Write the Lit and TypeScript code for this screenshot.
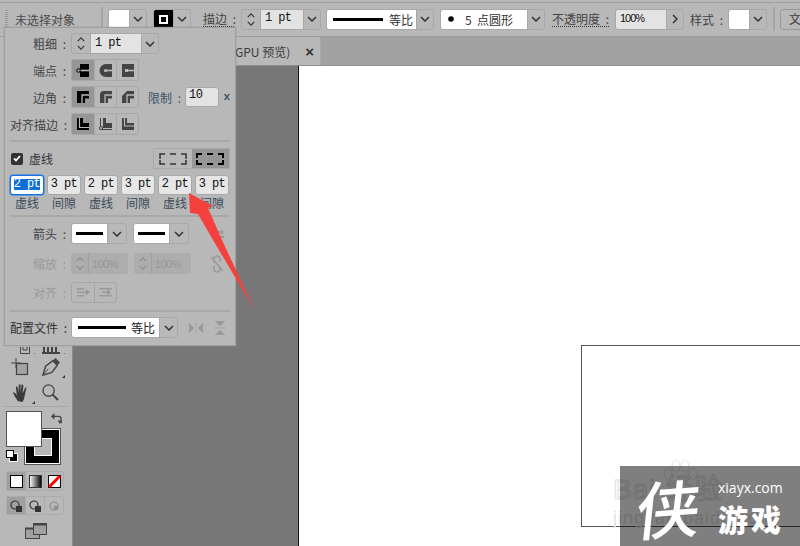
import { LitElement, html, css, svg } from "lit";
import { customElement } from "lit/decorators.js";

const chev = (dir: string = "down") => html`<svg class="chev" viewBox="0 0 10 6" width="10" height="6">
  <path d=${dir === "down" ? "M1 1l4 4 4-4" : "M1 5l4-4 4 4"} fill="none" stroke="currentColor" stroke-width="1.5"/></svg>`;

const spin = () => html`<span class="spin">${chev("up")}${chev("down")}</span>`;

const capIcon = (k: number, c: string) => html`<svg viewBox="0 0 14 14" width="14" height="14">
  ${k === 0 ? svg`<rect x="4" y="1" width="9" height="13" fill="${c}"/>` : k === 1 ? svg`<path d="M13 1H7a6.500 6.500 0 0 0 0 13h6z" fill="${c}"/>` : svg`<rect x="1" y="1" width="12" height="13" fill="${c}"/>`}
  <path d="M${k === 0 ? 2 : 6} 7.500H13" stroke="#b8b8b8" stroke-width="1.6"/>
  ${k === 0 ? svg`<circle cx="2.500" cy="7.500" r="1.800" fill="#969696" stroke="${c}"/>` : k === 1 ? svg`<circle cx="6.500" cy="7.500" r="1.600" fill="#b8b8b8"/>` : svg`<rect x="4" y="6" width="3" height="3" fill="#b8b8b8"/>`}
</svg>`;

const cornerIcon = (k: number, c: string) => html`<svg viewBox="0 0 14 14" width="14" height="14">
  <path d=${k === 0 ? "M1 1H13V8.500H9V13H1z" : k === 1 ? "M5 1H13V8.500H9V13H1V5Q1 1 5 1z" : "M6 1H13V8.500H9V13H1V6z"} fill="${c}"/>
  <path d="M13 5H6V13" fill="none" stroke="#b8b8b8" stroke-width="1.300"/>
</svg>`;

const alignIcon = (k: number, c: string) => html`<svg viewBox="0 0 14 14" width="14" height="14">
  <path d=${k === 0 ? "M1 1H7V6H13V13H1z" : k === 1 ? "M4 1H7V6H13V11H4z" : "M1 1H6V6H13V13H1z"} fill="${c}"/>
  ${k === 0 ? svg`<path d="M3.500 1V10.500H13" fill="none" stroke="#b8b8b8" stroke-width="1.200"/>` : k === 1 ? svg`<path d="M1.500 1V12.500H13" fill="none" stroke="${c}" stroke-width="1"/><circle cx="2" cy="11" r="1.600" fill="#b8b8b8" stroke="${c}"/>` : svg`<path d="M3.500 1V9H13" fill="none" stroke="#b8b8b8" stroke-width="1.200"/>`}
</svg>`;

const lineSvg = (w: number, h = 3) => html`<svg width=${w} height=${h} class="ln"><rect width=${w} height=${h} fill="#000"/></svg>`;

@customElement("app-root")
export class AppRoot extends LitElement {
  static styles = css`
    :host { display: block; width: 800px; height: 546px; position: relative; overflow: hidden;
      font-family: "Noto Sans CJK SC", "Liberation Sans", sans-serif; font-size: 12px; color: #3c3c3c; background: #b8b8b8; }
    * { box-sizing: border-box; }
    .app { width: 800px; height: 546px; display: flex; flex-direction: column; }
    svg { display: block; flex: none; }

    .top { height: 37px; flex: none; display: flex; align-items: center; padding-top: 2px;
      background: linear-gradient(#b8b8b8 0 2px, #a0a0a0 2px 3px, #b8b8b8 3px);
      border-bottom: 1px solid #9c9c9c; position: relative; }
    .top > * { flex: none; }
    .grip { width: 3px; height: 18px; margin-left: 5px; background: repeating-linear-gradient(#9a9a9a 0 1px, transparent 1px 2px); }
    .none { width: 93px; padding-left: 7px; color: #4a4a4a; white-space: nowrap; }
    .vsep { width: 2px; height: 24px; background: #a6a6a6; }
    .ctl { display: flex; height: 21px; border: 1px solid #a8a8a8; border-radius: 3px; align-items: stretch; flex: none; overflow: hidden; color: #222; }
    .chevbox { width: 17px; display: flex; align-items: center; justify-content: center; border-left: 1px solid #a8a8a8; color: #333; flex: none; }
    .swatch { width: 20px; background: #fff; }
    .swatch.stroke { width: 19px; background: #000; display: flex; align-items: center; justify-content: center; }
    .swatch.stroke i { display: block; width: 9px; height: 9px; border: 2px solid #fff; background: #000; }
    .lbl { white-space: nowrap; color: #444; word-spacing: 3px; }
    .dot { border-bottom: 1px dotted #333; line-height: 15px; }
    .spin { width: 18px; display: flex; flex-direction: column; align-items: center; justify-content: center; gap: 3px; color: #333; flex: none; }
    .spin .chev { width: 8px; height: 5px; }
    .num { font-family: "Liberation Mono", monospace; font-size: 12px; letter-spacing: -0.6px; background: #e3e3e3; padding: 0 0 2px 4px; color: #111; display: flex; align-items: center; white-space: nowrap; border-left: 1px solid #a8a8a8; }
    .white { background: #fff; display: flex; align-items: center; color: #333; white-space: nowrap; }
    .btn-w { height: 21px; width: 30px; border: 1px solid #999; border-radius: 3px; padding-left: 8px; margin-left: 5px; line-height: 18px; }

    .m-fill { margin-left: 5px; }
    .m-stroke { margin-left: 6px; }
    .l-stroke { margin-left: 12px; width: 31px; }
    .m-7 { margin-left: 7px; }
    .m-5 { margin-left: 5px; }
    .m-6 { margin-left: 6px; }
    .n43 { width: 43px; }
    .n51 { width: 51px; }
    .w-line { width: 89px; padding-left: 6px; gap: 6px; }
    .w-brush { width: 86px; padding-left: 7px; }
    .b5 { margin-left: 11px; }
    .l-op { margin-left: 7px; width: 57px; }
    .pct { width: 50px; border: 0; font-family: "Liberation Sans", sans-serif; font-size: 11px; letter-spacing: -1px; }
    .l-style { margin-left: 6px; width: 31px; }

    .main { flex: 1; display: flex; min-height: 0; }
    .tools { width: 73px; flex: none; background: #b8b8b8; border-right: 1px solid #8a8a8a; display: flex; flex-direction: column; align-items: flex-start; padding-top: 309px; overflow: hidden; }
    .tools > * { flex: none; }
    .toolrow { display: flex; width: 72px; justify-content: space-between; align-items: center; padding: 0 12px 0 11px; }
    .r1 { height: 26px; }
    .r2 { height: 25px; padding-left: 13px; padding-right: 13px; }
    .partial { height: 8px; padding: 0 12px 0 20px; align-items: flex-end; overflow: hidden; }
    .t { position: relative; display: block; }
    .t::after { content: ""; position: absolute; right: -5px; bottom: -2px; border-left: 3px solid transparent; border-bottom: 3px solid #333; }
    .hr { width: 65px; height: 1px; background: #a8a8a8; margin: 1px 0 0 3px; }
    .fs { position: relative; width: 62px; height: 58px; margin: 4px 0 0 6px; }
    .fill { position: absolute; left: 0; top: 0; width: 36px; height: 36px; background: #fff; border: 1px solid #555; z-index: 1; }
    .strokebox { position: absolute; left: 19px; top: 18px; width: 35px; height: 35px; background: #000; border: 1px solid #fff; outline: 1px solid #555; outline-offset: 0; display: flex; align-items: center; justify-content: center; }
    .strokebox i { display: block; width: 18px; height: 18px; background: #b8b8b8; border: 1px solid #fff; }
    .swap { position: absolute; right: 6px; top: 1px; }
    .mini { position: absolute; left: 0; top: 39px; width: 12px; height: 12px; }
    .group { display: flex; width: 58px; height: 19px; border: 1px solid #ababab; border-radius: 2px; margin-left: 6px; }
    .group > span { flex: 1; display: flex; align-items: center; justify-content: center; border-left: 1px solid #ababab; }
    .group > span:first-child { border-left: 0; background: #a0a0a0; }
    .g1 { margin-top: 2px; height: 20px; }
    .g2 { margin-top: 5px; }
    .scr { margin: 8px 0 0 25px; }

    .work { flex: 1; display: flex; flex-direction: column; min-width: 0; }
    .tabs { height: 29px; flex: none; background: #a2a2a2; display: flex; border-bottom: 1px solid #8f8f8f; }
    .tab { width: 248px; background: #b8b8b8; display: flex; align-items: center; justify-content: flex-end; padding-right: 6px; gap: 15px; color: #3a3a3a; white-space: nowrap; border-right: 1px solid #a8a8a8; }
    .tab b { font-size: 15px; color: #333; font-family: "Liberation Sans", sans-serif; }
    .area { flex: 1; display: flex; min-height: 0; }
    .gray { width: 226px; background: #777; border-right: 1px solid #111; flex: none; }
    .canvas { flex: 1; background: #fff; position: relative; overflow: hidden; }
    .artboard { position: absolute; left: 282px; top: 279px; width: 300px; height: 182px; border: 1px solid #555; }
    .bd { position: absolute; white-space: nowrap; font-family: "Liberation Sans", "Noto Sans CJK SC", sans-serif; }
    .bd.big { left: 314px; top: 408px; font-size: 28px; line-height: 32px; color: #fff; -webkit-text-stroke: 1px #dedede; letter-spacing: 1px; }
    .bd.small { left: 314px; top: 441px; font-size: 18px; line-height: 22px; color: #e2e2e2; letter-spacing: 1px; }
    .paw { position: absolute; left: 363px; top: 394px; }

    .panel { position: absolute; left: 4px; top: 27px; width: 232px; height: 319px; background: #b8b8b8; border: 1px solid #a0a0a0; padding: 5px 5px 0; display: flex; flex-direction: column; z-index: 3; box-shadow: 0 0 1px #8a8a8a; color: #444; }
    .row { display: flex; align-items: center; flex: none; }
    .row > .name { width: 56px; text-align: right; white-space: nowrap; margin-right: 5px; flex: none; word-spacing: 3px; }
    .dark { color: #333; }
    .h21 { height: 21px; }
    .h22 { height: 22px; margin-top: 5px; }
    .bg { display: flex; border: 1px solid #a8a8a8; height: 22px; border-radius: 2px; flex: none; }
    .bg > span { width: 22px; display: flex; align-items: center; justify-content: center; border-left: 1px solid #a8a8a8; }
    .bg > span:first-child { border-left: 0; background: #969696; }
    .limit { margin-left: 9px; white-space: nowrap; color: #3d5266; word-spacing: 3px; }
    .limitv { width: 37px; height: 20px; margin-left: 4px; background: #e3e3e3; border: 1px solid #a8a8a8; border-radius: 3px; font-family: "Liberation Mono", monospace; font-size: 12px; letter-spacing: -0.6px; padding-left: 3px; line-height: 15px; color: #111; }
    .xx { margin-left: 4px; font-family: "Liberation Mono", monospace; color: #3d5266; font-weight: 700; font-size: 11px; }
    .sep { height: 2px; background: #a8a8a8; flex: none; }
    .s1 { margin-top: 5px; }
    .dash { margin-top: 6px; height: 21px; justify-content: space-between; }
    .chk { display: flex; align-items: center; gap: 6px; padding-left: 1px; color: #333; }
    .box { width: 12px; height: 12px; background: #333; border-radius: 2px; display: flex; align-items: center; justify-content: center; }
    .dg { display: flex; height: 21px; width: 77px; border: 1px solid #a8a8a8; flex: none; }
    .dg > span { flex: 1; display: flex; align-items: center; justify-content: center; }
    .dg > span:last-child { background: #969696; }
    .vals { margin-top: 6px; display: flex; gap: 3px; flex: none; }
    .v { width: 34px; height: 20px; background: #e6e6e6; border: 1px solid #a8a8a8; border-radius: 3px; font-family: "Liberation Mono", monospace; font-size: 12px; letter-spacing: -0.6px; color: #111; text-align: center; line-height: 16px; white-space: nowrap; }
    .v.on { background: #fff; border: 1px solid #1473e6; box-shadow: 0 0 0 0.5px #1473e6; }
    .v.on em { font-style: normal; background: #0f6fd8; color: #fff; display: inline-block; line-height: 11px; }
    .caps { display: flex; gap: 3px; height: 14px; margin-top: 1px; flex: none; }
    .caps span { width: 34px; text-align: center; line-height: 14px; color: #3a4a58; white-space: nowrap; }
    .s2 { margin-top: 5px; }
    .arrow { margin-top: 6px; height: 21px; }
    .arrowsel { width: 56px; height: 21px; margin-right: 6px; }
    .arrowsel .white { width: 37px; justify-content: center; }
    .arrowsel .chevbox { width: 19px; }
    .dim { color: #9a9a9a; }
    .scale { margin-top: 9px; height: 21px; }
    .dimbox { width: 57px; height: 21px; margin-right: 6px; background: #adadad; display: flex; font-family: "Liberation Sans", sans-serif; font-size: 11px; letter-spacing: -0.6px; color: #969696; flex: none; align-items: center; border-radius: 2px; }
    .dimbox .spin { color: #8f8f8f; border-right: 1px solid #a0a0a0; height: 21px; margin-right: 3px; }
    .alignrow { margin-top: 8px; height: 21px; }
    .dimbg { display: flex; height: 21px; border: 1px solid #a6a6a6; border-radius: 3px; }
    .dimbg > span { width: 22px; display: flex; align-items: center; justify-content: center; border-left: 1px solid #a6a6a6; }
    .dimbg > span:first-child { border-left: 0; }
    .s3 { margin-top: 7px; }
    .profile { margin-top: 5px; height: 21px; }
    .profile .white { width: 87px; justify-content: space-between; padding: 0 4px 0 6px; color: #222; }
    .profile .chevbox { width: 18px; }
    .pi { margin-left: 11px; }
    .link { margin-left: 13px; }
    .extra { margin-left: 17px; }

    .arrowmark { position: absolute; left: 185px; top: 190px; z-index: 4; }
    .wm { position: absolute; left: 620px; top: 466px; width: 180px; height: 80px; background: rgba(0,0,0,.5); z-index: 5; color: #fff; display: flex; }
    .wm .xia { width: 98px; height: 80px; font-size: 55px; line-height: 80px; font-weight: 500; text-align: center; transform: scale(1.15) skewX(-10deg) rotate(-4deg); flex: none; }
    .wm .r { display: flex; flex-direction: column; }
    .wm .dom { font-family: "Open Sans", sans-serif; font-size: 14px; line-height: 20px; margin-top: 12px; }
    .wm .yx { font-size: 30px; font-weight: 900; line-height: 38px; letter-spacing: 3px; white-space: nowrap; margin-top: 1px; }
  `;

  render() {
    return html`
      <div class="app">
        <div class="top">
          <span class="grip"></span>
          <span class="none">未选择对象</span>
          <span class="vsep"></span>
          <span class="ctl m-fill"><span class="swatch"></span><span class="chevbox">${chev()}</span></span>
          <span class="ctl m-stroke"><span class="swatch stroke"><i></i></span><span class="chevbox">${chev()}</span></span>
          <span class="lbl dot l-stroke">描边 :</span>
          <span class="ctl m-7">${spin()}<span class="num n43">1 pt</span><span class="chevbox">${chev()}</span></span>
          <span class="ctl m-5"><span class="white w-line">${lineSvg(50)}等比</span><span class="chevbox">${chev()}</span></span>
          <span class="ctl m-6"><span class="white w-brush"><svg width="6" height="6"><circle cx="3" cy="3" r="2.800"/></svg><span class="b5">5&nbsp;&nbsp;点圆形</span></span><span class="chevbox">${chev()}</span></span>
          <span class="lbl dot l-op">不透明度 :</span>
          <span class="ctl m-6"><span class="num pct">100%</span><span class="chevbox"><svg viewBox="0 0 6 10" width="6" height="10"><path d="M1 1l4 4-4 4" fill="none" stroke="#333" stroke-width="1.500"/></svg></span></span>
          <span class="lbl l-style">样式 :</span>
          <span class="ctl m-7"><span class="swatch"></span><span class="chevbox">${chev()}</span></span>
          <span class="vsep m-6"></span>
          <span class="btn-w">文</span>
        </div>
        <div class="main">
          <div class="tools">
            <div class="toolrow partial">
              <span class="t"><svg width="10" height="7" viewBox="0 0 10 7"><path d="M.5 0V6.500H9.500V0M3 0V3H7V0" fill="none" stroke="#444"/></svg></span>
              <span class="t"><svg width="18" height="7" viewBox="0 0 18 7"><path d="M0 6H18M2 0V6M6 0V6M10 0V6M14 0V6" stroke="#444" stroke-width="2"/></svg></span>
            </div>
            <div class="toolrow r1">
              <svg width="18" height="18" viewBox="0 0 18 18"><path d="M0 5H10M5 0V10" stroke="#444"/><rect x="5.500" y="5.500" width="11" height="11" fill="#a4a4a4" stroke="#444" stroke-width="1.200"/></svg>
              <span class="t"><svg width="18" height="18" viewBox="0 0 20 20"><path d="M1 19L4 9 12 3 17 8 11 16z" fill="none" stroke="#444" stroke-width="1.600"/><path d="M12 3L15 0 20 5 17 8z" fill="#444"/><path d="M1 19L7 12" stroke="#444"/></svg></span>
            </div>
            <div class="toolrow r2">
              <span class="t"><svg width="17" height="18" viewBox="0 0 18 19"><path d="M5 18C3 15 1 12 0 9c1-1 2 0 4 3L3 3c1-1 2 0 2 1l1 5V1c1-1 2-1 2 0v8l1-8c1-1 2 0 2 1l-1 8 3-6c1-1 2 0 1 1l-2 9c0 2-1 3-2 5z" fill="#3a3a3a"/></svg></span>
              <svg width="17" height="17" viewBox="0 0 18 18"><circle cx="7" cy="7" r="6" fill="none" stroke="#444" stroke-width="1.400"/><path d="M11 11l6 6" stroke="#444" stroke-width="2.200"/></svg>
            </div>
            <div class="hr"></div>
            <div class="fs">
              <div class="fill"></div>
              <div class="strokebox"><i></i></div>
              <svg class="swap" width="11" height="13" viewBox="0 0 13 13"><path d="M1 4H9Q12 4 12 7V12" fill="none" stroke="#444" stroke-width="1.600"/><path d="M4 0V8L0 4zM8 9H13L10.500 13z" fill="#444"/></svg>
              <svg class="mini" viewBox="0 0 12 12"><rect x="3.500" y="3.500" width="8" height="8" fill="#000" stroke="#fff"/><rect x=".5" y=".5" width="7" height="7" fill="#fff" stroke="#000"/></svg>
            </div>
            <div class="group g1">
              <span><svg width="13" height="13"><rect x=".5" y=".5" width="12" height="12" fill="#fff" stroke="#000"/></svg></span>
              <span><svg width="13" height="13"><defs><linearGradient id="gr"><stop offset="0" stop-color="#fff"/><stop offset="1" stop-color="#000"/></linearGradient></defs><rect x=".5" y=".5" width="12" height="12" fill="url(#gr)" stroke="#333"/></svg></span>
              <span><svg width="13" height="13"><rect x=".5" y=".5" width="12" height="12" fill="#fff" stroke="#000"/><path d="M1 12L12 1" stroke="#f00" stroke-width="3"/></svg></span>
            </div>
            <div class="group g2">
              <span><svg width="12" height="12"><circle cx="5" cy="5" r="4" fill="none" stroke="#333" stroke-width="1.200"/><rect x="6" y="6" width="6" height="6" fill="#333"/></svg></span>
              <span><svg width="12" height="12"><circle cx="5" cy="5" r="4" fill="none" stroke="#333" stroke-width="1.200"/><rect x="6" y="6" width="6" height="6" fill="#333"/></svg></span>
              <span><svg width="10" height="10"><circle cx="5" cy="5" r="4" fill="none" stroke="#8f8f8f" stroke-width="1.200"/><rect x="5" y="5" width="4" height="4" fill="#8f8f8f"/></svg></span>
            </div>
            <svg class="scr" width="22" height="16" viewBox="0 0 22 16"><rect x=".5" y="5.500" width="14" height="10" fill="#a0a0a0" stroke="#444"/><path d="M0 5.500H14" stroke="#444" stroke-width="2"/><rect x="8.500" y=".5" width="13" height="11" fill="#a0a0a0" stroke="#444"/><path d="M8 1.500H22" stroke="#444" stroke-width="2"/></svg>
          </div>
          <div class="work">
            <div class="tabs"><div class="tab"><span>GPU 预览)</span><b>×</b></div></div>
            <div class="area">
              <div class="gray"></div>
              <div class="canvas">
                <div class="artboard"></div>
                <svg class="paw" width="36" height="24" viewBox="0 0 36 24" fill="none" stroke="#e2e2e2"><ellipse cx="6" cy="14" rx="4" ry="6"/><ellipse cx="14" cy="6" rx="4" ry="6"/><ellipse cx="23" cy="6" rx="4" ry="6"/><ellipse cx="31" cy="14" rx="4" ry="6"/></svg>
                <span class="bd big">Bai 经验</span>
                <span class="bd small">jingyan.baidu.com</span>
              </div>
            </div>
          </div>
        </div>
      </div>

      <div class="panel">
        <div class="row h21"><span class="name">粗细 :</span>
          <span class="ctl">${spin()}<span class="num n51">1 pt</span><span class="chevbox">${chev()}</span></span></div>
        <div class="row h22"><span class="name">端点 :</span>
          <span class="bg"><span>${capIcon(0, "#000")}</span><span>${capIcon(1, "#444")}</span><span>${capIcon(2, "#444")}</span></span></div>
        <div class="row h22"><span class="name">边角 :</span>
          <span class="bg"><span>${cornerIcon(0, "#000")}</span><span>${cornerIcon(1, "#444")}</span><span>${cornerIcon(2, "#444")}</span></span>
          <span class="limit">限制 :</span><span class="limitv">10</span><span class="xx">x</span></div>
        <div class="row h22"><span class="name">对齐描边 :</span>
          <span class="bg"><span>${alignIcon(0, "#000")}</span><span>${alignIcon(1, "#444")}</span><span>${alignIcon(2, "#444")}</span></span></div>
        <div class="sep s1"></div>
        <div class="row dash">
          <span class="chk"><span class="box"><svg width="8" height="7" viewBox="0 0 8 7"><path d="M1 3.500L3 5.500 7 1" fill="none" stroke="#fff" stroke-width="1.800"/></svg></span>虚线</span>
          <span class="dg">
            <span><svg width="28" height="12" viewBox="0 0 28 12" fill="none" stroke="#333" stroke-width="1.500"><path d="M1 6V1H6M11 1H17M22 1H27V6M27 7V11H22M17 11H11M6 11H1V7"/></svg></span>
            <span><svg width="28" height="12" viewBox="0 0 28 12" fill="none" stroke="#000" stroke-width="2"><path d="M1 5V1H6M11 1H17M22 1H27V5M27 7V11H22M17 11H11M6 11H1V7"/></svg></span>
          </span>
        </div>
        <div class="vals">
          <span class="v on"><em>2 pt</em></span><span class="v">3 pt</span><span class="v">2 pt</span><span class="v">3 pt</span><span class="v">2 pt</span><span class="v">3 pt</span>
        </div>
        <div class="caps"><span>虚线</span><span>间隙</span><span>虚线</span><span>间隙</span><span>虚线</span><span>间隙</span></div>
        <div class="sep s2"></div>
        <div class="row arrow"><span class="name">箭头 :</span>
          <span class="ctl arrowsel"><span class="white">${lineSvg(27)}</span><span class="chevbox">${chev()}</span></span>
          <span class="ctl arrowsel"><span class="white">${lineSvg(27)}</span><span class="chevbox">${chev()}</span></span>
          <svg class="extra" width="12" height="12" viewBox="0 0 12 12" fill="#9a9a9a"><path d="M0 3H9V1L12 4 9 7V5H0zM0 8H12V10H0z"/></svg>
        </div>
        <div class="row scale dim"><span class="name">缩放 :</span>
          <span class="dimbox">${spin()}100%</span><span class="dimbox">${spin()}100%</span>
          <svg class="link" width="14" height="18" viewBox="0 0 14 18" fill="none" stroke="#9a9a9a" stroke-width="1.600"><path d="M4 8V4a3 3 0 0 1 6 0v3M4 11v3a3 3 0 0 0 6 0v-3M1 2l12 14"/></svg>
        </div>
        <div class="row alignrow dim"><span class="name">对齐 :</span>
          <span class="dimbg">
            <span><svg width="13" height="11" viewBox="0 0 13 11" fill="#9a9a9a"><path d="M0 1H7V2.500H0zM0 8H7V9.500H0zM0 4.500H9V2L13 5.300 9 8.500V6H0z"/></svg></span>
            <span><svg width="13" height="11" viewBox="0 0 13 11" fill="#9a9a9a"><path d="M0 1H13V2.500H0zM0 8H13V9.500H0zM3 4.500H8V2L12 5.300 8 8.500V6H3z"/></svg></span>
          </span>
        </div>
        <div class="sep s3"></div>
        <div class="row profile"><span class="name dark">配置文件 :</span>
          <span class="ctl"><span class="white">${lineSvg(48)}等比</span><span class="chevbox">${chev()}</span></span>
          <svg class="pi" width="14" height="12" viewBox="0 0 14 12" fill="#9a9a9a"><path d="M0 1L5 6 0 11zM14 1V11L9 6zM7 0V12" stroke="#9a9a9a" stroke-width=".5"/></svg>
          <svg class="pi" width="12" height="14" viewBox="0 0 12 14" fill="#9a9a9a"><path d="M1 0H11L6 5zM1 14H11L6 9zM0 7H12" stroke="#9a9a9a" stroke-width=".5"/></svg>
        </div>
      </div>

      <svg class="arrowmark" width="72" height="122" viewBox="185 190 72 122"><path d="M189 193L213 206 208 208 222 240 254 309 213 240 198 214 190 213z" fill="#f4413e"/></svg>

      <div class="wm">
        <span class="xia">侠</span>
        <span class="r"><span class="dom">xiayx.com</span><span class="yx">游戏</span></span>
      </div>
    `;
  }
}
